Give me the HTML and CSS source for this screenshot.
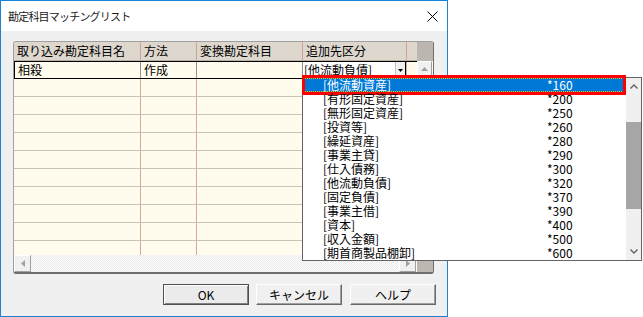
FILE: index.html
```html
<!DOCTYPE html>
<html lang="ja">

<head>
    <meta charset="UTF-8">
    <title>勘定科目マッチングリスト</title>
    <link rel="stylesheet" href="styles.css">
</head>

<body>
    <div class="window">
        <div class="titlebar">
            <span class="title">勘定科目マッチングリスト</span>
            <svg class="close" width="11" height="11" viewBox="0 0 11 11">
                <path d="M0.5 0.5L10.5 10.5M10.5 0.5L0.5 10.5" stroke="#000" stroke-width="1" fill="none"/>
            </svg>
        </div>

        <div class="content">
            <div class="grid">
                <div class="grid-main">
                    <div class="rows">
                        <div class="row header">
                            <div class="cell">取り込み勘定科目名</div>
                            <div class="cell">方法</div>
                            <div class="cell">変換勘定科目</div>
                            <div class="cell">追加先区分</div>
                            <div class="cell filler"></div>
                        </div>
                        <div class="row current">
                            <div class="cell first">相殺</div>
                            <div class="cell">作成</div>
                            <div class="cell"></div>
                            <div class="cell combo-cell">
                                <div class="combo">
                                    <span class="combo-text">[他流動負債]</span>
                                    <span class="combo-btn">
                                        <svg width="5" height="3" viewBox="0 0 5 3"><path d="M0 0H5L2.5 3Z" fill="#000"/></svg>
                                    </span>
                                </div>
                            </div>
                            <div class="cell filler"></div>
                        </div>
                        <div class="row"><div class="cell"></div><div class="cell"></div><div class="cell"></div><div class="cell"></div><div class="cell filler"></div></div>
                        <div class="row"><div class="cell"></div><div class="cell"></div><div class="cell"></div><div class="cell"></div><div class="cell filler"></div></div>
                        <div class="row"><div class="cell"></div><div class="cell"></div><div class="cell"></div><div class="cell"></div><div class="cell filler"></div></div>
                        <div class="row"><div class="cell"></div><div class="cell"></div><div class="cell"></div><div class="cell"></div><div class="cell filler"></div></div>
                        <div class="row"><div class="cell"></div><div class="cell"></div><div class="cell"></div><div class="cell"></div><div class="cell filler"></div></div>
                        <div class="row"><div class="cell"></div><div class="cell"></div><div class="cell"></div><div class="cell"></div><div class="cell filler"></div></div>
                        <div class="row"><div class="cell"></div><div class="cell"></div><div class="cell"></div><div class="cell"></div><div class="cell filler"></div></div>
                        <div class="row"><div class="cell"></div><div class="cell"></div><div class="cell"></div><div class="cell"></div><div class="cell filler"></div></div>
                        <div class="row"><div class="cell"></div><div class="cell"></div><div class="cell"></div><div class="cell"></div><div class="cell filler"></div></div>
                        <div class="row"><div class="cell"></div><div class="cell"></div><div class="cell"></div><div class="cell"></div><div class="cell filler"></div></div>
                    </div>
                    <div class="hscroll">
                        <div class="sb-btn">
                            <svg width="4" height="7" viewBox="0 0 4 7"><path d="M4 0V7L0 3.5Z" fill="#a0a0a0"/></svg>
                        </div>
                        <div class="sb-track"></div>
                        <div class="sb-btn">
                            <svg width="4" height="7" viewBox="0 0 4 7"><path d="M0 0V7L4 3.5Z" fill="#a0a0a0"/></svg>
                        </div>
                    </div>
                </div>
                <div class="vscroll">
                    <div class="vscroll-head"></div>
                    <div class="sb-btn">
                        <svg width="7" height="4" viewBox="0 0 7 4"><path d="M0 4H7L3.5 0Z" fill="#a0a0a0"/></svg>
                    </div>
                    <div class="sb-track"></div>
                    <div class="vscroll-corner"></div>
                </div>
            </div>

            <div class="buttons">
                <button type="button" class="btn default">OK</button>
                <button type="button" class="btn">キャンセル</button>
                <button type="button" class="btn help">ヘルプ</button>
            </div>
        </div>

        <div class="popup">
            <ul class="list">
                <li class="item selected"><span class="name">[他流動資産]</span><span class="code">*160</span></li>
                <li class="item"><span class="name">[有形固定資産]</span><span class="code">*200</span></li>
                <li class="item"><span class="name">[無形固定資産]</span><span class="code">*250</span></li>
                <li class="item"><span class="name">[投資等]</span><span class="code">*260</span></li>
                <li class="item"><span class="name">[繰延資産]</span><span class="code">*280</span></li>
                <li class="item"><span class="name">[事業主貸]</span><span class="code">*290</span></li>
                <li class="item"><span class="name">[仕入債務]</span><span class="code">*300</span></li>
                <li class="item"><span class="name">[他流動負債]</span><span class="code">*320</span></li>
                <li class="item"><span class="name">[固定負債]</span><span class="code">*370</span></li>
                <li class="item"><span class="name">[事業主借]</span><span class="code">*390</span></li>
                <li class="item"><span class="name">[資本]</span><span class="code">*400</span></li>
                <li class="item"><span class="name">[収入金額]</span><span class="code">*500</span></li>
                <li class="item"><span class="name">[期首商製品棚卸]</span><span class="code">*600</span></li>
            </ul>
            <div class="popup-sb">
                <div class="psb-btn">
                    <svg width="8" height="5" viewBox="0 0 8 5"><path d="M0.5 4.5L4 1L7.5 4.5" stroke="#606060" stroke-width="1.4" fill="none"/></svg>
                </div>
                <div class="psb-gap"></div>
                <div class="psb-thumb"></div>
                <div class="psb-rest"></div>
                <div class="psb-btn">
                    <svg width="8" height="5" viewBox="0 0 8 5"><path d="M0.5 0.5L4 4L7.5 0.5" stroke="#606060" stroke-width="1.4" fill="none"/></svg>
                </div>
            </div>
        </div>
    </div>
</body>

</html>
```

FILE: styles.css
```css
* {
    box-sizing: border-box;
}

body {
    margin: 0;
    width: 643px;
    height: 317px;
    overflow: hidden;
    background-color: #fff;
    font-family: "Noto Sans CJK JP", "Noto Sans", sans-serif;
    font-size: 12px;
    color: #000;
}

.window {
    position: relative;
    width: 448px;
    height: 317px;
    border: 1px solid #1883d7;
    background-color: #f0f0f0;
}

.titlebar {
    height: 30px;
    background-color: #fff;
    display: flex;
    align-items: center;
    justify-content: space-between;
    padding: 0 9px 0 7px;
}

.title {
    font-size: 11px;
    line-height: 14px;
    letter-spacing: -0.8px;
    color: #1a1a1a;
}

.close {
    display: block;
}

.content {
    padding: 10px 0 0 12px;
}

/* grid */

.grid {
    display: flex;
    width: 421px;
    height: 233px;
    border: 1px solid #a0a0a0;
    border-right-color: #6e6e6e;
    border-bottom: 2px solid #6e6e6e;
    border-radius: 3px;
    overflow: hidden;
    background-color: #fffcee;
}

.grid-main {
    width: 403px;
    display: flex;
    flex-direction: column;
}

.rows {
    height: 213px;
    overflow: hidden;
}

.row {
    display: grid;
    grid-template-columns: 127px 56px 106px 104px 10px;
    height: 18px;
    border-bottom: 1px solid #cbc3b7;
}

.cell {
    border-right: 1px solid #dba596;
    padding-left: 3px;
    line-height: 16px;
    white-space: nowrap;
    overflow: hidden;
}

.cell.filler {
    border-right: none;
}

.row.header {
    height: 19px;
    background-color: #ddd7cd;
    border-bottom: 1px solid #b8aea2;
}

.row.header .cell {
    line-height: 18px;
    border-right-color: #cfa496;
}

.row.current {
    border-top: 1px solid #000;
    border-bottom: 1px solid #000;
}

.row.current .cell {
    border-right-color: #8c959a;
}

.row.current .cell.first {
    border-left: 1px solid #000;
    padding-left: 3px;
}

.row.current .combo-cell {
    padding-left: 0;
    border-right-color: #dba596;
}

.combo {
    display: flex;
    height: 16px;
    background-color: #fff;
    border-right: 1px solid #000;
}

.combo-text {
    flex: 1;
    padding-left: 1px;
    line-height: 16px;
}

.combo-btn {
    width: 10px;
    display: flex;
    align-items: center;
    justify-content: center;
    background-color: #f0f0f0;
    border-left: 1px solid #c0c0c0;
}

/* scrollbars */

.hscroll {
    height: 17px;
    display: flex;
}

.sb-btn {
    width: 17px;
    height: 17px;
    display: flex;
    align-items: center;
    justify-content: center;
    background-color: #f0f0f0;
    border: 1px solid;
    border-color: #fff #a0a0a0 #a0a0a0 #fff;
}

.hscroll .sb-btn:last-child {
    margin-right: 1px;
}

.sb-track {
    flex: 1;
    background: repeating-conic-gradient(#fff 0 25%, #e9e9e9 0 50%) 0 0 / 2px 2px;
}

.vscroll {
    width: 16px;
    display: flex;
    flex-direction: column;
}

.vscroll .sb-btn {
    width: 15px;
    height: 16px;
}

.vscroll-head {
    height: 19px;
    background-color: #bbb7b0;
}

.vscroll-corner {
    height: 17px;
    background-color: #bcb8b1;
}

/* buttons */

.buttons {
    display: flex;
    gap: 7px;
    margin-top: 10px;
    padding-left: 150px;
}

.btn {
    width: 86px;
    height: 21px;
    padding: 0;
    font-family: inherit;
    font-size: 12px;
    color: #000;
    background-color: #f0f0f0;
    border: 1px solid;
    border-color: #fff #696969 #696969 #fff;
    box-shadow: inset -1px -1px 0 #a0a0a0;
}

.btn.default {
    border: 1px solid #505050;
    background-color: #ebebeb;
    box-shadow: inset 1px 1px 0 #fff, inset -1px -1px 0 #808080;
}

.btn.help {
    margin-left: 1px;
}

/* dropdown list */

.popup {
    position: absolute;
    left: 301px;
    top: 76px;
    width: 340px;
    height: 184px;
    display: flex;
    background-color: #fff;
    border: 1px solid #646464;
}

.list {
    list-style: none;
    margin: 0;
    padding: 0;
    width: 323px;
}

.item {
    position: relative;
    display: flex;
    height: 14px;
    line-height: 14px;
    padding-left: 20px;
    white-space: nowrap;
}

.item .name {
    width: 224px;
}

.item.selected {
    background-color: #0078d7;
    color: #fff;
}

.item.selected::before {
    content: "";
    position: absolute;
    left: 0;
    right: 0;
    top: 0;
    bottom: 0;
    border: 1px dotted #e8c400;
}

.item.selected::after {
    content: "";
    position: absolute;
    left: -1px;
    right: 0;
    top: -3px;
    bottom: -3px;
    border: 3px solid #ff0000;
}

.popup-sb {
    width: 15px;
    display: flex;
    flex-direction: column;
    background-color: #f0f0f0;
}

.psb-btn {
    height: 17px;
    display: flex;
    align-items: center;
    justify-content: center;
}

.psb-gap {
    height: 27px;
}

.psb-thumb {
    height: 87px;
    background-color: #a6a6a6;
}

.psb-rest {
    flex: 1;
}
```
